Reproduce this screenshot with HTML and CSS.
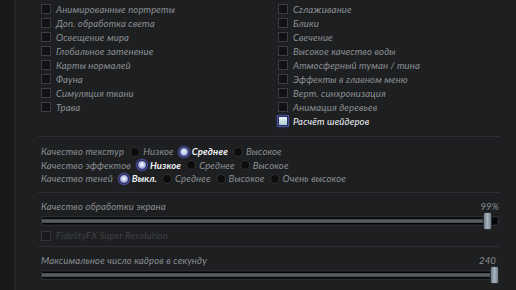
FILE: index.html
```html
<!DOCTYPE html>
<html lang="ru">
<head>
    <meta charset="UTF-8">
    <title>Настройки графики</title>
    <link rel="stylesheet" href="styles.css">
</head>
<body>
    <div class="page">
        <div class="rail"></div>
        <div class="content">
            <div class="checks">
                <div class="col">
                    <div class="check"><span class="box"></span>Анимированные портреты</div>
                    <div class="check"><span class="box"></span>Доп. обработка света</div>
                    <div class="check"><span class="box"></span>Освещение мира</div>
                    <div class="check"><span class="box"></span>Глобальное затенение</div>
                    <div class="check"><span class="box"></span>Карты нормалей</div>
                    <div class="check"><span class="box"></span>Фауна</div>
                    <div class="check"><span class="box"></span>Симуляция ткани</div>
                    <div class="check"><span class="box"></span>Трава</div>
                </div>
                <div class="col">
                    <div class="check"><span class="box"></span>Сглаживание</div>
                    <div class="check"><span class="box"></span>Блики</div>
                    <div class="check"><span class="box"></span>Свечение</div>
                    <div class="check"><span class="box"></span>Высокое качество воды</div>
                    <div class="check"><span class="box"></span>Атмосферный туман / тина</div>
                    <div class="check"><span class="box"></span>Эффекты в главном меню</div>
                    <div class="check"><span class="box"></span>Верт. синхронизация</div>
                    <div class="check"><span class="box"></span>Анимация деревьев</div>
                    <div class="check active"><span class="box"></span>Расчёт шейдеров</div>
                </div>
            </div>

            <div class="sep"></div>

            <div class="radios">
                <div class="radio-row">
                    <span class="label">Качество текстур</span>
                    <span class="opt"><span class="dot"></span>Низкое</span>
                    <span class="opt on"><span class="dot"></span>Среднее</span>
                    <span class="opt"><span class="dot"></span>Высокое</span>
                </div>
                <div class="radio-row">
                    <span class="label">Качество эффектов</span>
                    <span class="opt on"><span class="dot"></span>Низкое</span>
                    <span class="opt"><span class="dot"></span>Среднее</span>
                    <span class="opt"><span class="dot"></span>Высокое</span>
                </div>
                <div class="radio-row">
                    <span class="label">Качество теней</span>
                    <span class="opt on"><span class="dot"></span>Выкл.</span>
                    <span class="opt"><span class="dot"></span>Среднее</span>
                    <span class="opt"><span class="dot"></span>Высокое</span>
                    <span class="opt"><span class="dot"></span>Очень высокое</span>
                </div>
            </div>

            <div class="sep"></div>

            <div class="slider-block">
                <div class="slider-head">
                    <span>Качество обработки экрана</span>
                    <span class="value">99%</span>
                </div>
                <div class="slider">
                    <div class="track">
                        <div class="fill" style="width: 97%"></div>
                        <div class="thumb"></div>
                    </div>
                </div>
                <div class="check disabled"><span class="box"></span>FidelityFX Super Resolution</div>
            </div>

            <div class="sep"></div>

            <div class="slider-block">
                <div class="slider-head">
                    <span>Максимальное число кадров в секунду</span>
                    <span class="value value-fps">240</span>
                </div>
                <div class="slider">
                    <div class="track">
                        <div class="fill" style="width: 100%"></div>
                        <div class="thumb"></div>
                    </div>
                </div>
            </div>
        </div>
    </div>
</body>
</html>
```

FILE: styles.css
```css
body {
    margin: 0;
    background-color: #1e1f21;
    color: #8b9095;
    font-family: Lato, "Noto Sans", sans-serif;
    font-style: italic;
    font-size: 9.5px;
    letter-spacing: 0.15px;
    overflow: hidden;
}

.page {
    display: flex;
    height: 290px;
}

.rail {
    width: 14px;
    flex-shrink: 0;
    background-color: #19191b;
    border-right: 2px solid #252628;
}

.content {
    width: 458px;
    padding: 2px 0 0 25px;
}

/* чекбоксы */

.checks {
    display: flex;
}

.col {
    width: 237px;
    flex-shrink: 0;
}

.check {
    display: flex;
    align-items: center;
    height: 14px;
    white-space: nowrap;
}

.box {
    width: 8px;
    height: 8px;
    margin-right: 5px;
    flex-shrink: 0;
    background-color: #111213;
    border: 1px solid #3b3d40;
}

.check.active {
    color: #f1f3f5;
}

.check.active .box {
    background: linear-gradient(#e6f4f6, #a9cdd3);
    border-color: #2b2d5c;
    box-shadow: 0 0 0 1px #4b4f9c, 0 0 3px #6b6fd6;
}

.check.disabled {
    color: #3e4144;
}

.check.disabled .box {
    background-color: #18191a;
    border-color: #333538;
}

.sep {
    height: 1px;
    background-color: #2e2f32;
    margin-right: -1px;
    margin-left: -3px;
}

.checks + .sep {
    margin-top: 8px;
}

/* переключатели */

.radios {
    padding: 8px 0 6px;
}

.radio-row {
    display: flex;
    align-items: center;
    height: 13.5px;
    white-space: nowrap;
}

.label {
    margin-right: 6px;
}

.opt {
    display: flex;
    align-items: center;
    margin-right: 5px;
}

.dot {
    width: 8px;
    height: 8px;
    margin-right: 3px;
    border-radius: 50%;
    background-color: #0c0c0d;
    border: 1px solid #2f3134;
}

.opt.on {
    color: #f2f4f6;
    font-weight: 700;
}

.opt.on .dot {
    background: radial-gradient(circle at 50% 45%, #ffffff 0, #c9d4ec 35%, #7f88c8 75%);
    border-color: #2c2f66;
    box-shadow: 0 0 0 1px #4a4f9e, 0 0 3px #6c70d8;
}

/* ползунки */

.slider-block {
    padding: 8px 0 3px;
}

.slider-head {
    display: flex;
    justify-content: space-between;
    height: 12px;
    line-height: 12px;
}

.value-fps {
    margin-right: 3px;
}

.slider {
    height: 16px;
    display: flex;
    align-items: center;
}

.track {
    position: relative;
    width: 458px;
    height: 8px;
    background-color: #050505;
    border: 1px solid #2a2c2f;
    box-shadow: inset 0 0 0 1px #141516;
}

.fill {
    height: 4px;
    margin-top: 2px;
    background: linear-gradient(#3c4347, #5b656b 50%, #3c4347);
}

.thumb {
    position: absolute;
    top: -5px;
    right: 6px;
    width: 7px;
    height: 16px;
    border-radius: 2px;
    background: linear-gradient(90deg, #6f7d88, #a7b4bf 50%, #6f7d88);
    border: 1px solid #2a2d30;
}

.slider-block:last-child .thumb {
    right: -1px;
}
```
